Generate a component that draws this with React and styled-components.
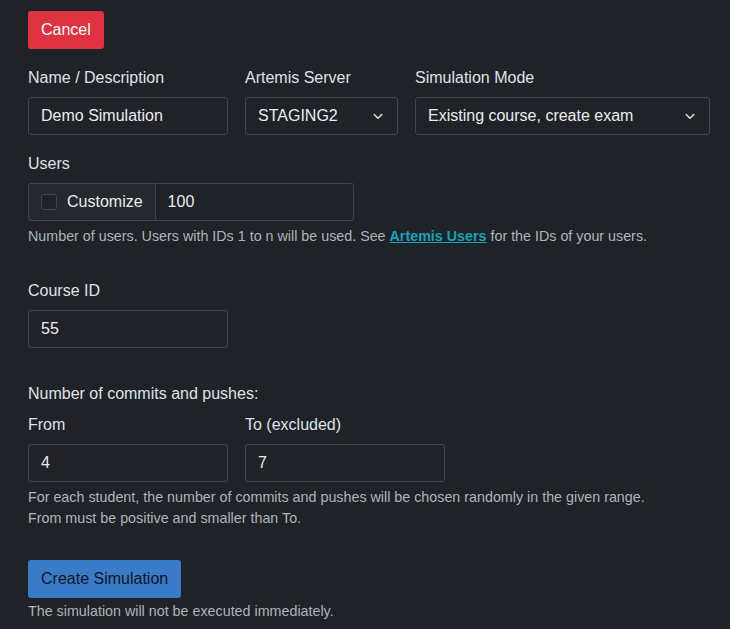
import styled, { createGlobalStyle } from "styled-components";

const Global = createGlobalStyle`
  body {
    margin: 0;
    background: #1f2226;
    color: #dee2e6;
    font-family: "Liberation Sans", Arial, sans-serif;
    font-size: 16px;
  }
`;

const Page = styled.div`
  padding: 11px 28px 0 28px;
  display: flex;
  flex-direction: column;
  align-items: flex-start;
`;

const Button = styled.button`
  font-family: inherit;
  font-size: 16px;
  height: 38px;
  padding: 0 13px;
  border: none;
  border-radius: 3px;
  background: ${(p) => (p.variant === "danger" ? "#df3241" : "#3a7bc8")};
  color: ${(p) => (p.variant === "danger" ? "#ffffff" : "#0b1623")};
  cursor: pointer;
`;

const Row = styled.div`
  display: flex;
  gap: 17px;
  margin-top: ${(p) => p.top || 0}px;
`;

const Field = styled.div`
  display: flex;
  flex-direction: column;
  width: ${(p) => p.width}px;
`;

const Label = styled.label`
  font-size: 16px;
  line-height: 20px;
  color: #dee2e6;
  margin-bottom: 9px;
  margin-top: ${(p) => p.top || 0}px;
`;

const Input = styled.input`
  box-sizing: border-box;
  height: 38px;
  width: ${(p) => (p.width ? `${p.width}px` : "100%")};
  background: #1f2226;
  border: 1px solid #43474d;
  border-radius: 3px;
  color: #e9ecef;
  font-family: inherit;
  font-size: 16px;
  padding: 0 12px;
  outline: none;
`;

const Select = styled.div`
  box-sizing: border-box;
  height: 38px;
  width: 100%;
  background: #1f2226;
  border: 1px solid #43474d;
  border-radius: 3px;
  color: #e9ecef;
  font-size: 16px;
  padding: 0 13px 0 12px;
  display: flex;
  align-items: center;
  justify-content: space-between;
`;

const Group = styled.div`
  display: flex;
  width: 326px;
  height: 38px;
`;

const Addon = styled.div`
  box-sizing: border-box;
  display: flex;
  align-items: center;
  gap: 10px;
  padding: 0 12px;
  background: #25282c;
  border: 1px solid #43474d;
  border-radius: 3px 0 0 3px;
  color: #e9ecef;
`;

const Check = styled.span`
  width: 14px;
  height: 14px;
  border: 1px solid #43474d;
  border-radius: 3px;
  background: #1f2226;
`;

const GroupInput = styled(Input)`
  flex: 1;
  border-left: none;
  border-radius: 0 3px 3px 0;
`;

const Help = styled.div`
  font-size: 14.3px;
  line-height: 21px;
  color: #adb5bd;
  margin-top: ${(p) => p.top || 0}px;
`;

const Link = styled.a`
  color: #16a2b8;
  font-weight: bold;
  text-decoration: underline;
`;

const Section = styled.div`
  display: flex;
  flex-direction: column;
  align-items: flex-start;
  margin-top: ${(p) => p.top || 0}px;
`;

const Chevron = () => (
  <svg width="12" height="12" viewBox="0 0 16 16" fill="none" stroke="#dee2e6" strokeWidth="2" strokeLinecap="round" strokeLinejoin="round">
    <path d="M3 6l5 5 5-5" />
  </svg>
);

export default function App() {
  return (
    <>
      <Global />
      <Page>
        <Button variant="danger">Cancel</Button>

        <Row top={19}>
          <Field width={200}>
            <Label>Name / Description</Label>
            <Input defaultValue="Demo Simulation" />
          </Field>
          <Field width={153}>
            <Label>Artemis Server</Label>
            <Select>
              STAGING2
              <Chevron />
            </Select>
          </Field>
          <Field width={295}>
            <Label>Simulation Mode</Label>
            <Select>
              Existing course, create exam
              <Chevron />
            </Select>
          </Field>
        </Row>

        <Section top={19}>
          <Label>Users</Label>
          <Group>
            <Addon>
              <Check />
              Customize
            </Addon>
            <GroupInput defaultValue="100" />
          </Group>
          <Help top={5}>
            Number of users. Users with IDs 1 to n will be used. See <Link>Artemis Users</Link> for the IDs of your users.
          </Help>
        </Section>

        <Section top={34}>
          <Label>Course ID</Label>
          <Input width={200} defaultValue="55" />
        </Section>

        <Section top={36}>
          <Label>Number of commits and pushes:</Label>
          <Row>
            <Field width={200}>
              <Label top={2}>From</Label>
              <Input defaultValue="4" />
            </Field>
            <Field width={200}>
              <Label top={2}>To (excluded)</Label>
              <Input defaultValue="7" />
            </Field>
          </Row>
          <Help top={5}>
            For each student, the number of commits and pushes will be chosen randomly in the given range.
            <br />
            From must be positive and smaller than To.
          </Help>
        </Section>

        <Section top={31}>
          <Button>Create Simulation</Button>
          <Help top={3}>The simulation will not be executed immediately.</Help>
        </Section>
      </Page>
    </>
  );
}
